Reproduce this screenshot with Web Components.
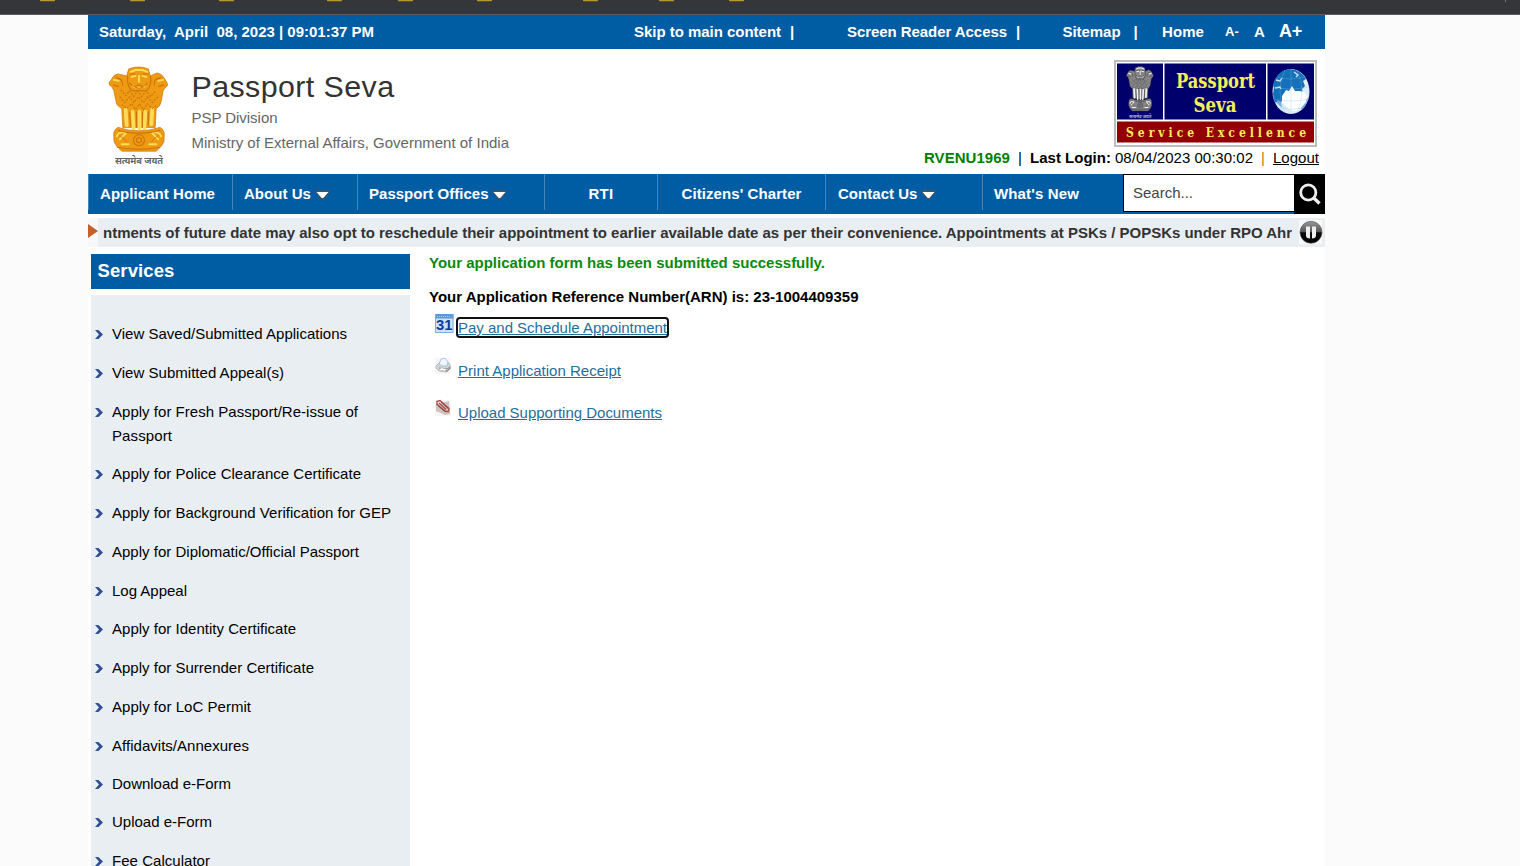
<!DOCTYPE html>
<html lang="en">
<head>
<meta charset="utf-8">
<title>Passport Seva</title>
<style>
html,body{margin:0;height:866px;overflow:hidden;background:#fbfbfb;font:15px "Liberation Sans",Arial,sans-serif;color:#000}
</style>
</head>
<body>
<passport-app></passport-app>
<script>
const make = (name, html, ready) => customElements.define(name, class extends HTMLElement {
  constructor(){ super(); this.attachShadow({mode:'open'}).innerHTML = html; }
  connectedCallback(){ if (ready) ready.call(this, this.shadowRoot); }
});

make('passport-app', `
<style>
:host{display:block;height:866px;overflow:hidden}
.page{width:1237px;margin-left:88px;height:851px;background:#fff;overflow:hidden}
.body{display:flex;padding:7px 0 0 3px}
</style>
<bookmark-strip></bookmark-strip>
<div class="page">
<top-bar></top-bar><site-header></site-header><site-nav></site-nav><news-ticker></news-ticker>
<div class="body"><side-menu></side-menu><result-panel></result-panel></div>
</div>`);

make('bookmark-strip', `
<style>:host{display:block;height:14px;background:#35363a;border-bottom:1px solid #5f5b60}svg{display:block}</style>
<svg width="1520" height="14"><g fill="#b9982f"></g><path d="M1505.5 0v2" stroke="#777"/></svg>`, function(r){
  r.querySelector('g').innerHTML = [40,130,219,327,398,477,583,659,729].map(x=>`<path d="M${x} 0h15v.6q0 .7-.8.7h-13.4q-.8 0-.8-.7z"/>`).join('');
});

make('top-bar', `
<style>:host{display:flex;align-items:center;height:34px;background:#005da4;color:#fff;font-weight:bold;line-height:34px}
.s{font-size:13px}.l{font-size:18px;line-height:32px;margin-top:-2px}</style>
<t-fit w="275" x="11">Saturday,&nbsp; April&nbsp; 08, 2023 | 09:01:37 PM</t-fit>
<t-fit w="147" x="260">Skip to main content</t-fit><t-fit w="4" x="9">|</t-fit>
<t-fit w="160" x="53">Screen Reader Access</t-fit><t-fit w="4" x="9">|</t-fit>
<t-fit w="58" x="42.500">Sitemap</t-fit><t-fit w="4" x="13">|</t-fit>
<t-fit w="42" x="24.500">Home</t-fit>
<t-fit class="s" w="14" x="21">A-</t-fit><t-fit w="11" x="15">A</t-fit><t-fit class="l" w="23" x="14">A+</t-fit>`);

make('state-emblem', `
<style>:host{display:block}svg{display:block;width:100%;height:100%}
text{font:bold 9px "Noto Sans Devanagari","Noto Sans",sans-serif;fill:var(--m,#666)}</style>
<svg viewBox="0 0 62 103" preserveAspectRatio="none">
<g fill="var(--a,#ee9a12)" stroke="var(--b,#d27a10)" stroke-width=".8">
<path d="M10 8Q5 9 4 13L1 17Q1 20 4 21L6 25Q8 35 9 39Q12 42 14 43L15 62H48L49 43Q53 41 54 36L56 25L58 22Q62 20 60 17L57 12Q55 8 50 7L43 10L41 3Q31-1 21 3L19 10Z"/>
<path d="M10 62Q5 65 6 71Q5 77 9 81L14 86H49L54 81Q58 77 57 71Q58 65 53 62Q31 69 10 62Z"/>
</g>
<g fill="none" stroke="var(--c,#ffdc55)" stroke-width="2.200" stroke-linecap="round">
<path d="M18 44l1 16M25 46l1 17M32 46v17M38 46l-1 17M45 44l-1 15" stroke-width="3.800"/>
<path d="M23 6l5-2h7l5 2M24 11l4-1M35 10l4 1M31.500 10v6M25 20q6 4 13 0M6 14l5 1M51 15l5-1M12 74l6-6M51 74l-6-6M14 79h7M42 79h7M9 71q2-5 8-4M54 71q-2-5-8-4" stroke-width="2"/>
</g>
<g fill="none" stroke="var(--b,#c46c0b)" stroke-width="1.100" opacity=".85">
<path d="M22 8h6M35 8h6M22 17q4 6 9 2q6 4 9-2M27 21q5 3 9 0M20 10q-1 12 5 15h14q6-5 4-15M8 12q7 0 7 8M54 12q-8 0-7 8M5 19l6 2M57 19l-6 2"/>
<path d="M13 24l5 6 4-5 4 6 4-6 4 6 5-6 4 6 6-6M12 31l5 6 5-6 4 6 5-6 5 6 4-6 5 6 6-6M14 39l5 4 5-5 4 6 4-6 4 6 4-6 5 5 4-3" stroke-dasharray="2 1.500"/>
<path d="M22 46l1 15M29 46v16M35 46v16M41 46v14M10 65q21 6 43 0M9 82q22 4 44 0"/>
<circle cx="31.500" cy="75" r="5.500"/><circle cx="31.500" cy="75" r="2.500"/><path d="M11 70q5 2 8 7M52 70q-5 2-8 7" stroke-width=".8"/>
</g>
<text x="7" y="98.500" textLength="49" lengthAdjust="spacingAndGlyphs">सत्यमेव जयते</text>
</svg>`);

make('seva-logo', `
<style>:host{display:block;width:203px;height:87px;position:relative}
svg{display:block}state-emblem{position:absolute;left:12px;top:6px;width:28px;height:54px;--a:#858585;--b:#33333f;--c:#f4f4f4;--m:#b4b4d2}
text{font-family:"DejaVu Serif Condensed","DejaVu Serif",serif;font-weight:bold;fill:#f8f05a}</style>
<svg width="203" height="87" viewBox="0 0 203 87">
<rect x="1" y="1" width="201" height="85" fill="#fff" stroke="#bdbdbd" stroke-width="2"/>
<path fill="#00006c" d="M3 3.500h46v56H3zM50.500 3.500H152v56H50.500zM153.500 3.500H200v56h-46.500z"/>
<path fill="#920006" d="M3 61.500h197V82.500H3z"/>
<text x="62" y="28" font-size="20" textLength="79" lengthAdjust="spacingAndGlyphs">Passport</text>
<text x="79.500" y="51.500" font-size="20" textLength="43" lengthAdjust="spacingAndGlyphs">Seva</text>
<text x="12" y="77" font-size="12" textLength="180">Service Excellence</text>
<ellipse cx="177" cy="31.500" rx="18.500" ry="22.500" fill="#dceefa"/>
<path fill="#1470b8" d="M161 19q5-9 15-10 11 1 16 10l-3 2 2 5-3 3 1 6-6 0-4-3-3 2-2 5-4 0-3 3-3-2-2 3-2-3-1-6 1-6-1-3z"/>
<path fill="#1470b8" d="M160 38l4-1 3 5 1 6q-5-4-8-10zM191 40l3-2q-2 8-6 12l-2-3z" opacity=".5"/>
<path d="M162 20l4 1 2-3M161 28l5-1 1 2M180 12l4 3-2 2" fill="none" stroke="#cfe6f6" stroke-width="1.300"/>
<path fill="#fff" d="M168 36l4-6 3 1 3-5 3 5 5 0 4 1 3 4-1 6-5 6-4 3-6 0-4-4-5-5z"/>
<path d="M164 17q11 4 26 0M159 27q17 4 36 0M160 39q17 4 35 0M165 48q12 3 24 0M177 9v45M171 10q-10 21 0 43M183 10q10 21 0 43" fill="none" stroke="#83bde2" stroke-width=".3"/>
</svg><state-emblem></state-emblem>`);

make('site-header', `
<style>:host{display:flex;height:125px}
.em{width:61px;height:102px;margin:17px 0 0 20px}
.t{margin:19px 0 0 22.500px;color:#666;line-height:25px;display:flex;flex-direction:column;align-items:flex-start}
h1{margin:0;font-size:30.400px;font-weight:400;line-height:37px;color:#333}
.r{margin-left:auto;width:420px;display:flex;flex-direction:column;align-items:flex-end}
seva-logo{margin:11px 8px 0 0}
.u{display:flex;line-height:22px;margin-right:6px}
b{color:#008000}</style>
<state-emblem class="em"></state-emblem>
<div class="t"><h1><t-fit w="203">Passport Seva</t-fit></h1><t-fit w="86">PSP Division</t-fit><t-fit w="317.500">Ministry of External Affairs, Government of India</t-fit></div>
<div class="r"><seva-logo></seva-logo><div class="u"><b><t-fit w="86">RVENU1969</t-fit></b><t-fit w="4" x="8">|</t-fit><strong><t-fit w="81" x="8">Last Login:</t-fit></strong><t-fit w="138" x="4">08/04/2023 00:30:02</t-fit><t-fit w="4" x="8" style="color:#c87a10">|</t-fit><t-fit w="46" x="8" style="text-decoration:underline">Logout</t-fit></div></div>`);

make('site-nav', `
<style>:host{display:flex;height:40px;background:#005da4;color:#fff;font-weight:bold;line-height:40px}
.i{display:flex;align-items:center;box-sizing:border-box;height:36px;border-left:1px solid #4a83b6;padding-left:11px;line-height:40px}
.c{padding:0;justify-content:center}
.i t-fit{margin-top:4px}
.q{box-sizing:border-box;width:171px;height:38px;border:1px solid #000;border-width:1px 0 1px 1px;background:#fff;color:#444;font-weight:400;line-height:36px;padding-left:9px}
.b{height:40px;background:#000;flex:1}</style>
<div class="i" style="width:144px"><t-fit w="115">Applicant Home</t-fit></div>
<div class="i" style="width:125px"><t-fit w="67">About Us</t-fit><nav-caret></nav-caret></div>
<div class="i" style="width:187px"><t-fit w="119.500">Passport Offices</t-fit><nav-caret></nav-caret></div>
<div class="i c" style="width:113px"><t-fit w="25">RTI</t-fit></div>
<div class="i c" style="width:168px"><t-fit w="120">Citizens' Charter</t-fit></div>
<div class="i" style="width:157px;padding-left:12px"><t-fit w="79.500">Contact Us</t-fit><nav-caret></nav-caret></div>
<div class="i" style="width:141px"><t-fit w="85">What's New</t-fit></div>
<div class="q"><t-fit w="60">Search...</t-fit></div>
<div class="b"><svg width="31" height="40"><circle cx="14.300" cy="18.500" r="7.600" fill="none" stroke="#eee" stroke-width="2.800"/><path d="M19.800 24l5.700 5.500" stroke="#eee" stroke-width="3.400"/></svg></div>`);

make('nav-caret', `
<style>:host{display:block;margin:5px 0 0 3.500px}svg{display:block}</style>
<svg width="15" height="10"><path d="M.5 .5h14v1.500L8.500 9.300h-2L.5 2z" fill="#54504c"/><path d="M1.500 2h12L8.300 8H6.700z" fill="#fff"/></svg>`);

make('news-ticker', `
<style>:host{display:flex;height:29px;margin-top:4px;background:#e9eef2;color:#333;font-weight:bold;line-height:30px}
.a{width:10px;background:#f8f8f8}.t{margin-left:5px;width:1189px;overflow:hidden}
svg{display:block}.p{margin:2px 0 0 7px}</style>
<div class="a"><svg width="10" height="29"><path d="M0 6l10 7L0 20z" fill="#c4602a"/></svg></div>
<div class="t"><t-fit w="1189">ntments of future date may also opt to reschedule their appointment to earlier available date as per their convenience. Appointments at PSKs / POPSKs under RPO Ahr</t-fit></div>
<svg class="p" width="24" height="24"><defs><linearGradient id="g" x2="0" y2="1"><stop offset="0" stop-color="#999"/><stop offset=".48" stop-color="#555"/><stop offset=".52" stop-color="#0a0a0a"/><stop offset="1" stop-color="#000"/></linearGradient></defs><path fill="#fafafa" d="M0 0h23v24H0z"/><circle cx="12" cy="12.300" r="11" fill="url(#g)" stroke="#555" stroke-width=".6"/><path d="M7 6.500h4v12q-4 0-4-3zM13 6.500h4v9q0 3-4 3z" fill="#eee"/></svg>`);

make('side-item', `
<style>:host{display:flex;line-height:24px}
svg{flex:none;margin:7px 8px 0 3px}</style>
<svg width="10" height="11"><path d="M1 1h3.500L9 5.500 4.500 10H1L5 5.500z" fill="#35549a"/><path d="M3.500 2l3.500 3.500L3.500 9" fill="none" stroke="#2a4687"/></svg>
<div><slot></slot></div>`);

make('side-menu', `
<style>:host{display:block;width:319px;flex:none}
h2{margin:0 0 6px;background:#005da4;color:#fff;height:35px;line-height:34px;font-size:18.500px;padding-left:6.500px}
.l{background:#e9eef2;padding-top:27px;height:560px;overflow:hidden}
t-fit{display:block}</style>
<h2><t-fit w="77">Services</t-fit></h2><div class="l"></div>`, function(r){
  const gaps = [15,15,14,15,15,15,14,15,15,15,14,14,15,0];
  r.querySelector('.l').innerHTML = [
    [['View Saved/Submitted Applications',235]],[['View Submitted Appeal(s)',172]],
    [['Apply for Fresh Passport/Re-issue of',246],['Passport',60]],
    [['Apply for Police Clearance Certificate',249]],[['Apply for Background Verification for GEP',279]],
    [['Apply for Diplomatic/Official Passport',247]],[['Log Appeal',75]],[['Apply for Identity Certificate',184]],
    [['Apply for Surrender Certificate',202]],[['Apply for LoC Permit',139]],[['Affidavits/Annexures',137]],
    [['Download e-Form',119]],[['Upload e-Form',100]],[['Fee Calculator',98]]
  ].map((l,i)=>`<side-item style="margin-bottom:${gaps[i]}px">${l.map(([t,w])=>`<t-fit w="${w}">${t}</t-fit>`).join('')}</side-item>`).join('');
});

make('result-panel', `
<style>:host{display:block;margin-left:19px;flex:1}
.g{color:#0c8a0c;font-weight:bold;line-height:18px}
.n{font-weight:bold;line-height:18px;margin-top:16px}
.k{display:flex;height:42.500px;color:#1f6f9b;padding-left:6px}
.k t-fit{text-decoration:underline}
.ks{margin-top:8px}
.k svg{display:block;flex:none;width:19px;height:20px}
.k div{margin:3px 0 0 2px;height:21px;line-height:22px;box-sizing:border-box;padding:0 2px}
.k .f{border:2px solid #101010;border-radius:4px;line-height:18px;padding:0}
.k text{font:bold 14.500px "Liberation Sans",sans-serif;fill:#123a9c}
</style>
<div class="g"><t-fit w="396">Your application form has been submitted successfully.</t-fit></div>
<div class="n"><t-fit w="429.500">Your Application Reference Number(ARN) is: 23-1004409359</t-fit></div>
<div class="ks">
<div class="k"><svg viewBox="0 0 19 20"><path fill="#cfe3f8" d="M0 0h18.500v19H0z"/><path fill="#5b97dc" d="M0 0h18.500v4.500H0z"/><path d="M2 2.500h14" stroke="#a9cdf3" stroke-dasharray="1 1"/><path d="M.5 0v18.500h17.500V0" fill="none" stroke="#80addf"/><text x="1" y="16" textLength="16.500" lengthAdjust="spacingAndGlyphs">31</text></svg><div class="f"><t-fit w="209">Pay and Schedule Appointment</t-fit></div></div>
<div class="k"><svg viewBox="0 0 19 20"><path fill="#f7f7f7" d="M0 1h16v16H0z"/><path d="M1 9l4-4 9 1 2 5-4 4-8-1-3-3z" fill="#d3d6d8" stroke="#a3a6aa" stroke-width=".7"/><path d="M4 7l2-5 4-1 3 4-1 4-5 0z" fill="#eef6ff" stroke="#8fb0cf" stroke-width=".7"/><path d="M4 11l8 1 3-2M6 13l6 1 3-3" fill="none" stroke="#808080" stroke-width=".9"/><path d="M6 11l5 1-1 2-5-1z" fill="#fff"/></svg><div><t-fit w="163">Print Application Receipt</t-fit></div></div>
<div class="k"><svg viewBox="0 0 19 20"><path fill="#f7f6f5" d="M0 1h16v16H0z"/><path d="M1 5l13-3 1 13-5 1-9-4z" fill="#cbc5bd"/><path d="M2 2.500l3-1 9 8-.5 3-3 0-8.500-7zM4 4l7 6.500" fill="none" stroke="#ad4a4c" stroke-width="1.400"/><path d="M5.500 2.500l7.500 7M3 6.500l7 6" stroke="#7e3a3c" stroke-width=".8"/></svg><div><t-fit w="204">Upload Supporting Documents</t-fit></div></div>
</div>`);

/* A one-line label whose tracking is set so that it fills the given measure. */
make('t-fit', `<style>:host{display:block;flex:none;white-space:nowrap}span{display:block;width:max-content}</style><span><slot></slot></span>`, function(r){
  const s = r.querySelector('span'), w = +this.getAttribute('w'), n = this.textContent.length;
  if (this.hasAttribute('x')) this.style.marginLeft = this.getAttribute('x') + 'px';
  const nat = s.getBoundingClientRect().width;
  if (n > 1 && nat) s.style.letterSpacing = ((w - nat) / n) + 'px';
  this.style.width = w + 'px';
});
</script>
</body>
</html>
